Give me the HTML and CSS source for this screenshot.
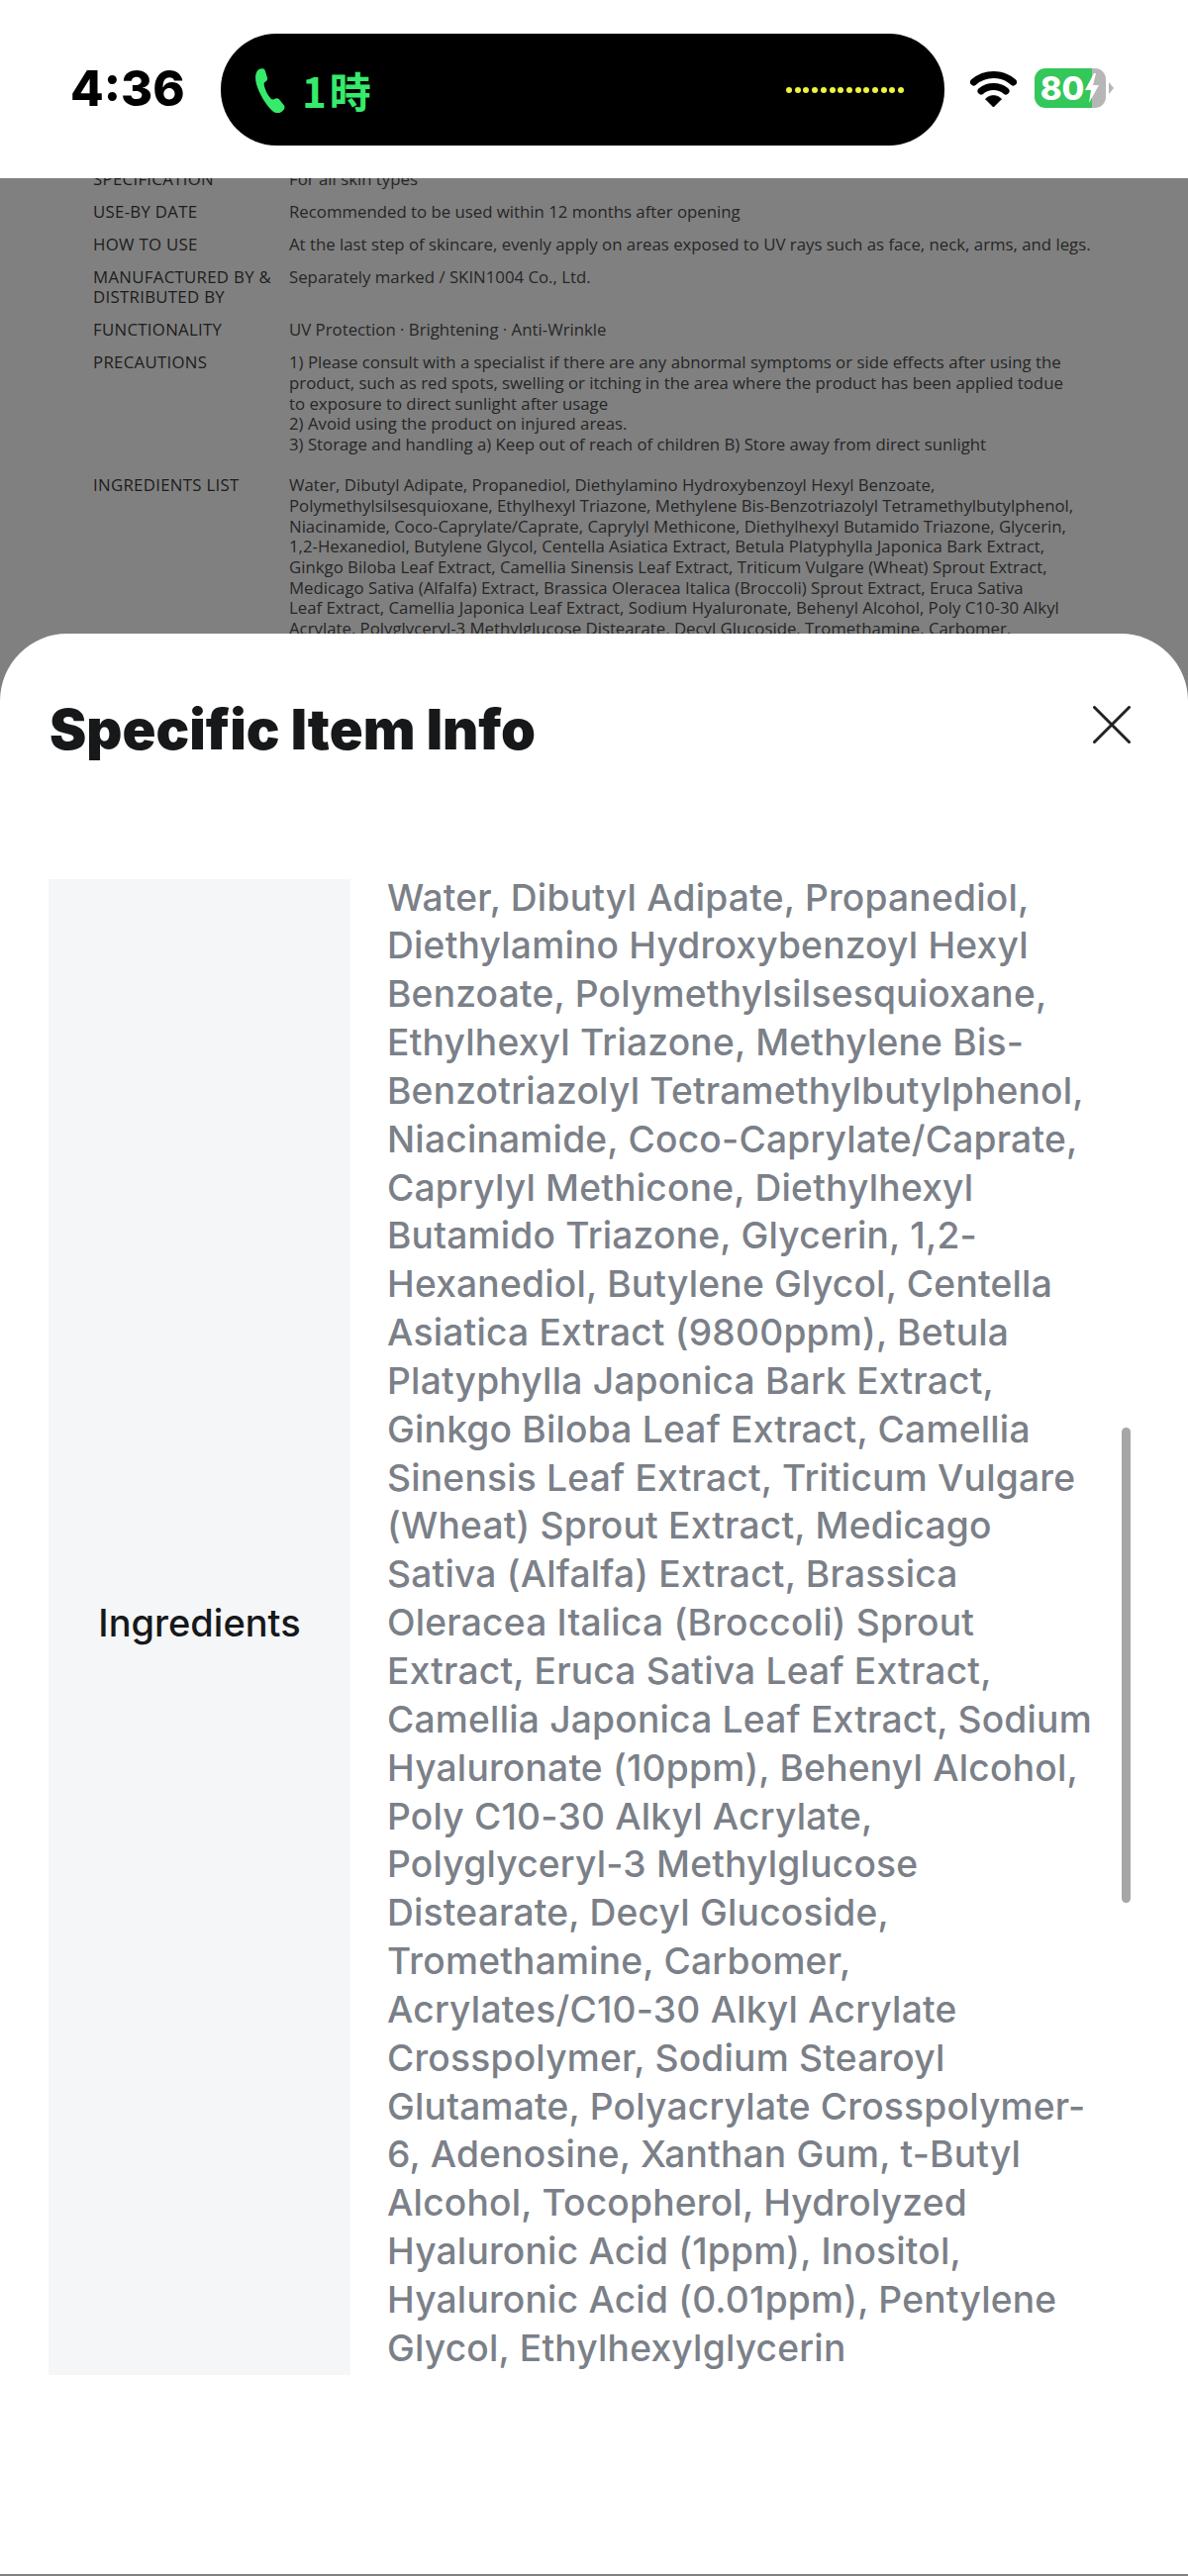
FILE: index.html
```html
<!DOCTYPE html>
<html lang="en">
    <head>
        <meta charset="UTF-8">
        <meta name="viewport" content="width=device-width, initial-scale=1.0">
        <title>Specific Item Info</title>
        <link rel="stylesheet" href="styles.css">
    </head>
    <body>
        <div class="screen">
            <div class="status-bar">
                <span class="hora">4:36</span>
                <div class="ilha">
                    <svg class="telefone" viewBox="0 0 32 46" width="32" height="46">
                        <path d="M3 3.500C5 1 9 .5 10.500 2.500l2.500 8c.5 2-.5 3.300-2.500 4.500-1 .8-1 2-.5 4 1 4.500 3.500 9 6.500 12.500 1 1 2 1.300 3.200.7 2-1 3.500-1.500 5-.2l5.300 6.500c1.200 2 .3 4.500-2.500 6.500-3 2-6.500 1.500-9.500-1C11 37 5 27 2 17 .5 11 .8 6.500 3 3.500z" fill="#36ea6c"/>
                    </svg>
                    <span class="duracao">1時</span>
                    <div class="pontos">
                        <i></i><i></i><i></i><i></i><i></i><i></i><i></i><i></i><i></i><i></i><i></i><i></i><i></i><i></i>
                    </div>
                </div>
                <svg class="wifi" viewBox="0 0 47 38" width="47" height="38">
                    <path d="M3.500 13C15 3 32 3 43.500 13" fill="none" stroke="#000" stroke-width="7" stroke-linecap="round"/>
                    <path d="M11 22C18 16 29 16 36 22" fill="none" stroke="#000" stroke-width="7" stroke-linecap="round"/>
                    <path d="M15.500 30C20 25.500 27 25.500 31.500 30L23.500 38z" fill="#000" stroke="#000" stroke-width="1" stroke-linejoin="round"/>
                </svg>
                <div class="bateria">
                    <div class="carga">
                        <span>80</span>
                        <svg class="raio" viewBox="0 0 16 30" width="16" height="30">
                            <path d="M10 0L1 17h6L5 30l10-18H9l3-12z" fill="#fff"/>
                        </svg>
                    </div>
                    <div class="ponta"></div>
                </div>
            </div>

            <div class="fundo">
                <div class="ficha">
                    <div class="ficha-linha">
                        <div class="ficha-rotulo">SPECIFICATION</div>
                        <div>For all skin types</div>
                    </div>
                    <div class="ficha-linha">
                        <div class="ficha-rotulo">USE-BY DATE</div>
                        <div>Recommended to be used within 12 months after opening</div>
                    </div>
                    <div class="ficha-linha">
                        <div class="ficha-rotulo">HOW TO USE</div>
                        <div>At the last step of skincare, evenly apply on areas exposed to UV rays such as face, neck, arms, and legs.</div>
                    </div>
                    <div class="ficha-linha">
                        <div class="ficha-rotulo">MANUFACTURED BY &amp;<br>DISTRIBUTED BY</div>
                        <div>Separately marked / SKIN1004 Co., Ltd.</div>
                    </div>
                    <div class="ficha-linha">
                        <div class="ficha-rotulo">FUNCTIONALITY</div>
                        <div>UV Protection · Brightening · Anti-Wrinkle</div>
                    </div>
                    <div class="ficha-linha">
                        <div class="ficha-rotulo">PRECAUTIONS</div>
                        <div>1) Please consult with a specialist if there are any abnormal symptoms or side effects after using the<br>product, such as red spots, swelling or itching in the area where the product has been applied todue<br>to exposure to direct sunlight after usage<br>2) Avoid using the product on injured areas.<br>3) Storage and handling a) Keep out of reach of children B) Store away from direct sunlight</div>
                    </div>
                    <div class="ficha-linha ficha-lista">
                        <div class="ficha-rotulo">INGREDIENTS LIST</div>
                        <div>Water, Dibutyl Adipate, Propanediol, Diethylamino Hydroxybenzoyl Hexyl Benzoate,<br>Polymethylsilsesquioxane, Ethylhexyl Triazone, Methylene Bis-Benzotriazolyl Tetramethylbutylphenol,<br>Niacinamide, Coco-Caprylate/Caprate, Caprylyl Methicone, Diethylhexyl Butamido Triazone, Glycerin,<br>1,2-Hexanediol, Butylene Glycol, Centella Asiatica Extract, Betula Platyphylla Japonica Bark Extract,<br>Ginkgo Biloba Leaf Extract, Camellia Sinensis Leaf Extract, Triticum Vulgare (Wheat) Sprout Extract,<br>Medicago Sativa (Alfalfa) Extract, Brassica Oleracea Italica (Broccoli) Sprout Extract, Eruca Sativa<br>Leaf Extract, Camellia Japonica Leaf Extract, Sodium Hyaluronate, Behenyl Alcohol, Poly C10-30 Alkyl<br>Acrylate, Polyglyceryl-3 Methylglucose Distearate, Decyl Glucoside, Tromethamine, Carbomer,</div>
                    </div>
                </div>
            </div>

            <div class="folha">
                <div class="folha-topo">
                    <h1>Specific Item Info</h1>
                    <svg class="fechar" viewBox="0 0 38 38" width="38" height="38">
                        <path d="M1.500 1.500L36.500 36.500M36.500 1.500L1.500 36.500" fill="none" stroke="#222" stroke-width="3" stroke-linecap="round"/>
                    </svg>
                </div>
                <div class="tabela">
                    <div class="tabela-rotulo">Ingredients</div>
                    <div class="tabela-valor">Water, Dibutyl Adipate, Propanediol,<br>Diethylamino Hydroxybenzoyl Hexyl<br>Benzoate, Polymethylsilsesquioxane,<br>Ethylhexyl Triazone, Methylene Bis-<br>Benzotriazolyl Tetramethylbutylphenol,<br>Niacinamide, Coco-Caprylate/Caprate,<br>Caprylyl Methicone, Diethylhexyl<br>Butamido Triazone, Glycerin, 1,2-<br>Hexanediol, Butylene Glycol, Centella<br>Asiatica Extract (9800ppm), Betula<br>Platyphylla Japonica Bark Extract,<br>Ginkgo Biloba Leaf Extract, Camellia<br>Sinensis Leaf Extract, Triticum Vulgare<br>(Wheat) Sprout Extract, Medicago<br>Sativa (Alfalfa) Extract, Brassica<br>Oleracea Italica (Broccoli) Sprout<br>Extract, Eruca Sativa Leaf Extract,<br>Camellia Japonica Leaf Extract, Sodium<br>Hyaluronate (10ppm), Behenyl Alcohol,<br>Poly C10-30 Alkyl Acrylate,<br>Polyglyceryl-3 Methylglucose<br>Distearate, Decyl Glucoside,<br>Tromethamine, Carbomer,<br>Acrylates/C10-30 Alkyl Acrylate<br>Crosspolymer, Sodium Stearoyl<br>Glutamate, Polyacrylate Crosspolymer-<br>6, Adenosine, Xanthan Gum, t-Butyl<br>Alcohol, Tocopherol, Hydrolyzed<br>Hyaluronic Acid (1ppm), Inositol,<br>Hyaluronic Acid (0.01ppm), Pentylene<br>Glycol, Ethylhexylglycerin</div>
                </div>
                <div class="rolagem"></div>
            </div>
        </div>
    </body>
</html>
```

FILE: styles.css
```css
html, body {
    height: 100%;
}

body {
    margin: 0;
    padding: 0;
    font-family: Inter, 'Noto Sans', sans-serif;
}

.screen {
    width: 1200px;
    height: 2602px;
    background: #808080;
    display: flex;
    flex-direction: column;
    overflow: hidden;
}

/* barra de status */
.status-bar {
    height: 180px;
    flex: none;
    background: #fff;
    display: flex;
    align-items: flex-start;
}

.hora {
    width: 223px;
    margin-top: 62px;
    padding-left: 71px;
    box-sizing: border-box;
    font-size: 49px;
    line-height: 56px;
    font-weight: 800;
    color: #000;
}

.ilha {
    width: 731px;
    height: 113px;
    margin-top: 34px;
    background: #000;
    border-radius: 56px;
    display: flex;
    align-items: center;
    padding: 0 41px 0 34px;
    box-sizing: border-box;
}

.telefone {
    flex: none;
}

.duracao {
    margin-left: 16px;
    font-family: 'Noto Sans CJK JP', sans-serif;
    font-size: 42px;
    line-height: 50px;
    font-weight: 700;
    letter-spacing: 3px;
    color: #36ea6c;
}

.pontos {
    margin-left: auto;
    display: flex;
    gap: 2.700px;
}

.pontos i {
    display: block;
    width: 6px;
    height: 6px;
    border-radius: 50%;
    background: #eef53a;
}

.wifi {
    margin: 70px 0 0 26px;
    flex: none;
}

.bateria {
    margin: 69px 0 0 18px;
    display: flex;
    align-items: center;
}

.carga {
    width: 72px;
    height: 40px;
    border-radius: 11px;
    background: linear-gradient(to right, #34c759 80%, #b6b6b6 80%);
    display: flex;
    align-items: center;
    justify-content: center;
    color: #fff;
    font-size: 33px;
    font-weight: 800;
}

.raio {
    flex: none;
}

.ponta {
    width: 0;
    height: 0;
    margin-left: 3px;
    border-left: 5px solid #b6b6b6;
    border-top: 6px solid transparent;
    border-bottom: 6px solid transparent;
}

/* pagina escurecida atras da folha */
.fundo {
    height: 460px;
    flex: none;
    overflow: hidden;
}

.ficha {
    margin-top: -9.500px;
    padding-left: 94px;
    font-family: 'Open Sans', sans-serif;
    font-size: 16.800px;
    line-height: 20.700px;
    color: #262626;
}

.ficha-linha {
    display: grid;
    grid-template-columns: 198px 1fr;
    margin-bottom: 12.300px;
}

.ficha-lista {
    margin-top: 20.500px;
}

.ficha-rotulo {
    font-weight: 500;
    letter-spacing: 0.300px;
    color: #1c1c1c;
}

/* folha branca */
.folha {
    position: relative;
    height: 1960px;
    flex: none;
    background: #fff;
    border-radius: 68px 68px 0 0;
    padding: 0 49px;
    box-sizing: border-box;
}

.folha-topo {
    display: flex;
    justify-content: space-between;
    align-items: flex-start;
    height: 248px;
}

.folha-topo h1 {
    margin: 64px 0 0 1px;
    font-size: 56px;
    line-height: 66px;
    font-weight: 900;
    color: #17181a;
}

.fechar {
    margin: 73px 9px 0 0;
}

.tabela {
    display: flex;
    gap: 37px;
    height: 1511px;
}

.tabela-rotulo {
    width: 305px;
    flex: none;
    background: #f5f6f8;
    padding-bottom: 10px;
    box-sizing: border-box;
    display: flex;
    align-items: center;
    justify-content: center;
    font-size: 38px;
    font-weight: 500;
    color: #17181a;
}

.tabela-valor {
    margin-top: -5.500px;
    font-size: 37.200px;
    line-height: 48.850px;
    letter-spacing: 0.200px;
    font-weight: 500;
    color: #7b8088;
}

.rolagem {
    position: absolute;
    top: 802px;
    right: 58px;
    width: 9px;
    height: 480px;
    border-radius: 5px;
    background: #a6a6a6;
}
```
